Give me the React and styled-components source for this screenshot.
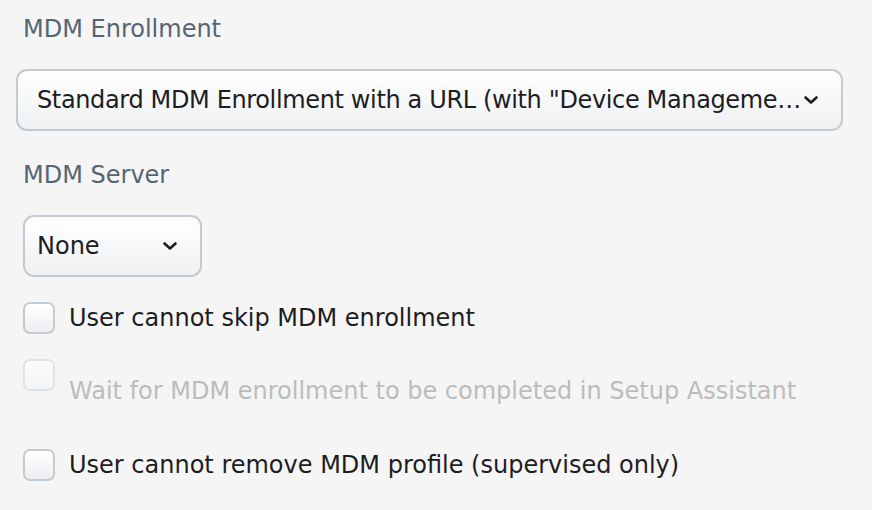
import React from "react";
import styled, { createGlobalStyle } from "styled-components";

const GlobalStyle = createGlobalStyle`
  html, body {
    margin: 0;
    padding: 0;
    background: #f5f5f5;
  }
  body {
    font-family: "DejaVu Sans", "Liberation Sans", sans-serif;
  }
`;

const Page = styled.div`
  padding: 15px 0 0 23px;
  width: 872px;
  height: 510px;
  box-sizing: border-box;
`;

const FieldLabel = styled.div`
  font-size: 24px;
  line-height: 28px;
  color: #566573;
  margin-bottom: ${(p) => p.$gap}px;
`;

const SelectBox = styled.div`
  box-sizing: border-box;
  display: flex;
  align-items: center;
  gap: 4px;
  height: 62px;
  width: ${(p) => p.$width}px;
  margin-left: ${(p) => p.$shift || 0}px;
  margin-bottom: ${(p) => p.$gap}px;
  padding: 0 22px 0 ${(p) => 12 - (p.$shift || 0)}px;
  border: 2px solid #c3cbd1;
  border-radius: 11px;
  background: linear-gradient(#ffffff, #eef0f2);
  color: #1d1d1f;
  font-size: 24px;
`;

const SelectText = styled.span`
  flex: 1;
  min-width: 0;
  white-space: nowrap;
  letter-spacing: ${(p) => p.$tight || 0}px;
`;

const Chevron = () => (
  <svg width="16" height="10" viewBox="0 0 16 10" style={{ flexShrink: 0 }}>
    <path
      d="M2.5 2.5 L8 7.5 L13.5 2.5"
      fill="none"
      stroke="#1d1d1f"
      strokeWidth="2.6"
      strokeLinecap="round"
      strokeLinejoin="round"
    />
  </svg>
);

const CheckRow = styled.label`
  display: flex;
  align-items: ${(p) => (p.$top ? "flex-start" : "center")};
  gap: 14px;
  margin-bottom: ${(p) => p.$gap}px;
`;

const Box = styled.span`
  box-sizing: border-box;
  width: 32px;
  height: 32px;
  flex-shrink: 0;
  border: 2px solid ${(p) => (p.$disabled ? "#e0e3e6" : "#c3cbd1")};
  border-radius: 7px;
  background: ${(p) =>
    p.$disabled
      ? "linear-gradient(#fbfbfb, #f3f4f5)"
      : "linear-gradient(#ffffff, #eceef1)"};
`;

const CheckText = styled.span`
  font-size: 24px;
  line-height: 28px;
  color: ${(p) => (p.$disabled ? "#bcbcbc" : "#1d1d1f")};
  margin-top: ${(p) => p.$offset || 0}px;
`;

export default function App() {
  return (
    <>
      <GlobalStyle />
      <Page>
        <FieldLabel $gap={26}>MDM Enrollment</FieldLabel>
        <SelectBox $width={827} $shift={-7} $gap={30}>
          <SelectText $tight={-0.36}>
            Standard MDM Enrollment with a URL (with "Device Manageme…
          </SelectText>
          <Chevron />
        </SelectBox>
        <FieldLabel $gap={26}>MDM Server</FieldLabel>
        <SelectBox $width={179} $gap={25}>
          <SelectText>None</SelectText>
          <Chevron />
        </SelectBox>
        <CheckRow $gap={25}>
          <Box />
          <CheckText>User cannot skip MDM enrollment</CheckText>
        </CheckRow>
        <CheckRow $top $gap={44}>
          <Box $disabled />
          <CheckText $disabled $offset={18}>
            Wait for MDM enrollment to be completed in Setup Assistant
          </CheckText>
        </CheckRow>
        <CheckRow $gap={0}>
          <Box />
          <CheckText>User cannot remove MDM profile (supervised only)</CheckText>
        </CheckRow>
      </Page>
    </>
  );
}
